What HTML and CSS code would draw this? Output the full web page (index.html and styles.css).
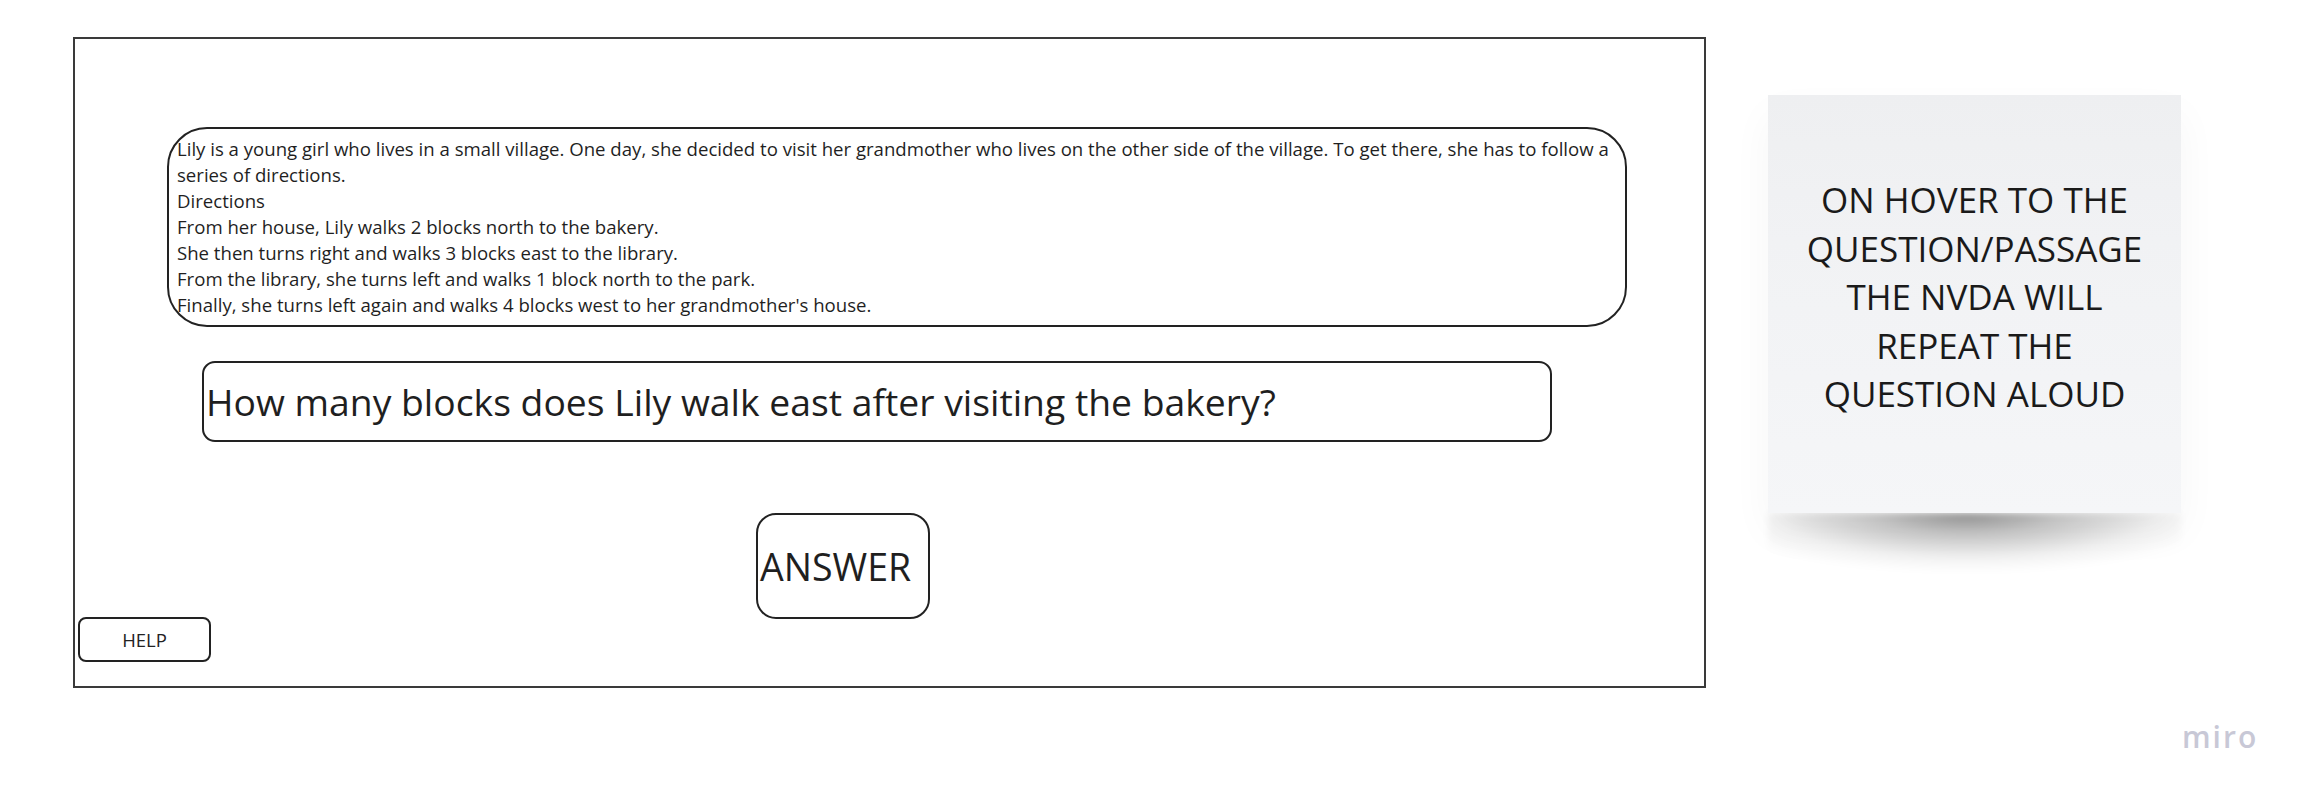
FILE: index.html
```html
<!DOCTYPE html>
<html>
<head>
<meta charset="utf-8">
<link rel="stylesheet" href="styles.css">
</head>
<body>
<div class="board">
  <div class="frame">
    <div class="passage">
      <p>Lily is a young girl who lives in a small village. One day, she decided to visit her grandmother who lives on the other side of the village. To get there, she has to follow a series of directions.</p>
      <p>Directions</p>
      <p>From her house, Lily walks 2 blocks north to the bakery.</p>
      <p>She then turns right and walks 3 blocks east to the library.</p>
      <p>From the library, she turns left and walks 1 block north to the park.</p>
      <p>Finally, she turns left again and walks 4 blocks west to her grandmother's house.</p>
    </div>
    <div class="question">How many blocks does Lily walk east after visiting the bakery?</div>
    <div class="actions">
      <div class="help">HELP</div>
      <div class="answer">ANSWER</div>
    </div>
  </div>
  <div class="note">
    <div class="note-text">ON HOVER TO THE<br>QUESTION/PASSAGE<br>THE NVDA WILL<br>REPEAT THE<br>QUESTION ALOUD</div>
  </div>
</div>
<div class="miro">miro</div>
</body>
</html>
```
FILE: styles.css
```css
html {
  margin: 0;
  padding: 0;
  background: #ffffff;
}
body {
  margin: 0;
  padding: 0;
  font-family: "Open Sans", "Liberation Sans", sans-serif;
  color: #1a1a1a;
  width: 2310px;
  height: 803px;
  overflow: hidden;
  position: relative;
}
.board {
  display: flex;
  align-items: flex-start;
  padding: 37px 0 0 73px;
  gap: 62px;
}
.frame {
  box-sizing: border-box;
  width: 1633px;
  height: 651px;
  border: 2px solid #3a3a3a;
  display: flex;
  flex-direction: column;
  align-items: flex-start;
  background: #fff;
}
.passage {
  box-sizing: border-box;
  margin: 88px 0 0 92px;
  width: 1460px;
  height: 200px;
  border: 2px solid #222;
  border-radius: 40px;
  padding: 7px 8px 0 8px;
  font-size: 18.6px;
  line-height: 26px;
  color: #1f1f1f;
}
.passage p {
  margin: 0;
}
.question {
  box-sizing: border-box;
  margin: 34px 0 0 127px;
  width: 1350px;
  height: 81px;
  border: 2px solid #222;
  border-radius: 13px;
  display: flex;
  align-items: center;
  padding-left: 2px;
  font-size: 37.3px;
  color: #1f1f1f;
}
.actions {
  display: flex;
  align-items: flex-start;
  margin-top: 71px;
}
.help {
  box-sizing: border-box;
  margin: 104px 0 0 3px;
  width: 133px;
  height: 45px;
  border: 2px solid #222;
  border-radius: 8px;
  display: flex;
  align-items: center;
  justify-content: center;
  font-size: 18.5px;
  color: #222;
}
.answer {
  box-sizing: border-box;
  margin-left: 545px;
  width: 174px;
  height: 106px;
  border: 2px solid #222;
  border-radius: 20px;
  display: flex;
  align-items: center;
  padding-left: 2px;
  font-size: 37.5px;
  color: #1f1f1f;
}
.note {
  position: relative;
  box-sizing: border-box;
  margin-top: 58px;
  width: 413px;
  height: 418px;
  background: linear-gradient(180deg, #eeeff1 0%, #f1f2f4 35%, #f5f6f8 100%);
  padding-top: 81px;
  text-align: center;
  box-shadow: 0 20px 40px rgba(0, 0, 0, 0.04);
}
.note::after {
  content: "";
  position: absolute;
  left: 0;
  right: 0;
  top: 100%;
  height: 60px;
  background: radial-gradient(ellipse 62% 100% at 48% 0%, rgba(0,0,0,0.42) 0%, rgba(0,0,0,0.22) 35%, rgba(0,0,0,0.05) 75%, rgba(0,0,0,0) 100%);
  filter: blur(3px);
  z-index: -1;
}
.note-text {
  font-size: 35px;
  line-height: 48.5px;
  color: #1a1a1a;
}
.miro {
  position: absolute;
  left: 2182px;
  top: 715px;
  font-size: 30px;
  font-weight: 600;
  letter-spacing: 2px;
  color: #c8c8d6;
  line-height: 44px;
}
```
